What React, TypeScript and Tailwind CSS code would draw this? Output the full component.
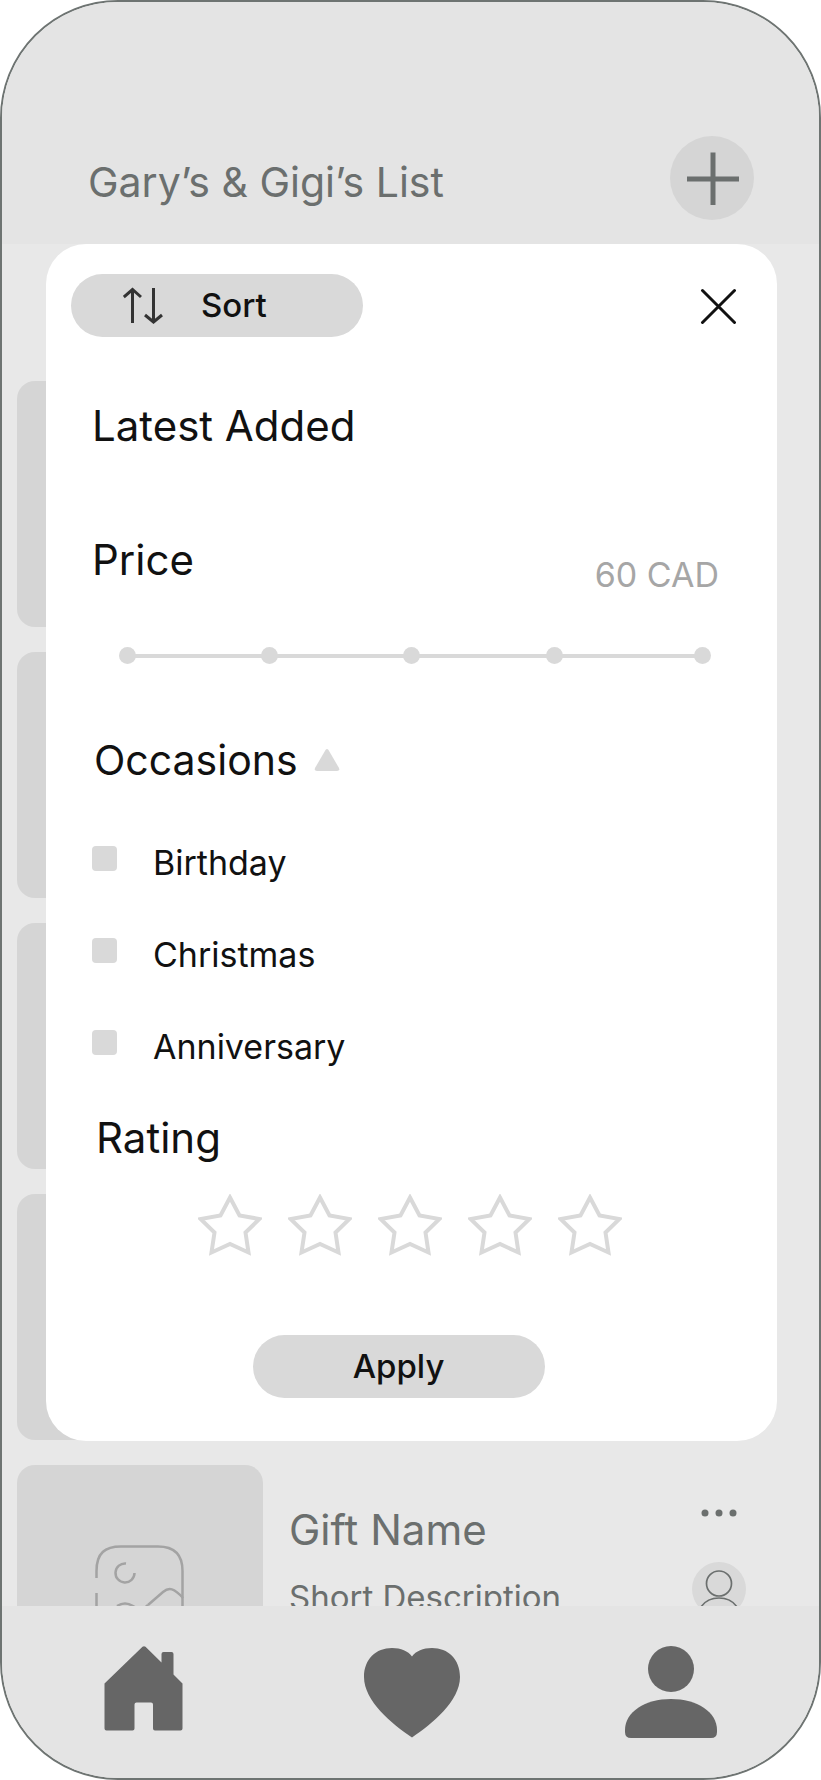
import { useState } from 'react';

const occasions = ['Birthday', 'Christmas', 'Anniversary'];
const stars = [1, 2, 3, 4, 5];

function SortIcon() {
	return (
		<svg width="40" height="38" viewBox="0 0 40 38" fill="none" stroke="#333" strokeWidth="3" aria-hidden="true">
			<path d="M9.500 36V2.500M.8 10L9.500 2.500L18 10" />
			<path d="M30.500 1V34.500M22 28L30.500 35L39 28" />
		</svg>
	);
}

function StarIcon({ filled }: { filled: boolean }) {
	return (
		<svg className="block" width="64" height="62" viewBox="0 0 64 62" fill={filled ? '#d9d9d9' : 'none'} stroke="#d9d9d9" strokeWidth="4" aria-hidden="true">
			<path d="M32 3.500L41.500 21.500L61.500 25L47.500 38.500L50.500 58.500L32 50L13.500 58.500L16.500 38.500L2.500 25L22.500 21.500Z" />
		</svg>
	);
}

function Thumbnail() {
	return (
		<div className="flex h-[246px] w-[246px] shrink-0 items-center justify-center rounded-[18px] bg-[#d5d5d5]">
			<svg width="90" height="86" viewBox="0 0 90 86" fill="none" stroke="#a3a3a3" strokeWidth="2.500" aria-hidden="true">
				<path d="M1.500 33V26C1.500 8 10 1.500 26 1.500H63C79 1.500 87.500 9 87.500 26V60C87.500 77 79 84.500 63 84.500H26C10 84.500 1.500 77 1.500 60V48" />
				<path d="M31 18.500A9.500 9.500 0 1 0 39.500 28" />
				<path d="M53 60L68 47C74 42 79 43 88 53" />
				<path d="M22 61C27 58 33 58 38 61L46 66L53 60" />
			</svg>
		</div>
	);
}

function GiftRow() {
	return (
		<li className="flex text-[#6b6f6e]">
			<Thumbnail />
			<div className="ml-[26px] grow pt-10">
				<h2 className="text-[42px] leading-[50px]">Gift Name</h2>
				<p className="mt-[22px] text-[33px] leading-[40px]">Short Description</p>
			</div>
			<div className="flex w-[54px] flex-col items-center pt-11">
				<button type="button" aria-label="More options">
					<svg className="block" width="36" height="8" viewBox="0 0 36 8" fill="currentColor" aria-hidden="true">
						<circle cx="4" cy="4" r="3.500" />
						<circle cx="18" cy="4" r="3.500" />
						<circle cx="32" cy="4" r="3.500" />
					</svg>
				</button>
				<svg className="mt-[45px]" width="54" height="54" viewBox="0 0 54 54" fill="none" stroke="currentColor" strokeWidth="1.700" aria-hidden="true">
					<circle cx="27" cy="27" r="27" fill="#d9d9d9" stroke="none" />
					<circle cx="27" cy="21.500" r="12.500" />
					<path d="M9 45C13 39 20 36 27 36S41 39 45 45" />
				</svg>
			</div>
		</li>
	);
}

function SortDialog() {
	const [price, setPrice] = useState(60);
	const [rating, setRating] = useState(0);

	return (
		<div role="dialog" aria-label="Sort" className="z-10 col-start-1 row-start-1 mr-[42px] mb-[165px] ml-11 self-start rounded-[40px] bg-white pt-[30px] pb-[43px] text-[#111]">
			<div className="flex items-center justify-between pr-10 pl-[25px]">
				<button type="button" className="flex h-[63px] w-[292px] items-center gap-[38px] rounded-full bg-[#d9d9d9] pl-[52px] text-[33px] font-medium">
					<SortIcon />
					Sort
				</button>
				<button type="button" aria-label="Close">
					<svg className="block" width="38" height="36" viewBox="0 0 38 36" stroke="#111" strokeWidth="3" strokeLinecap="round" aria-hidden="true">
						<path d="M3.500 2.500L35.500 34.500M35.500 2.500L3.500 34.500" />
					</svg>
				</button>
			</div>

			<div className="px-[46px]">
				<h2 className="mt-16 text-[42px] leading-[50px]">Latest Added</h2>

				<div className="mt-[84px] flex items-start justify-between pr-3">
					<label htmlFor="price" className="text-[42px] leading-[50px]">Price</label>
					<output htmlFor="price" className="text-[34px] leading-[80px] text-[#a6a6a6]">{price} CAD</output>
				</div>

				<div className="relative mt-8 mr-5 ml-[27px] grid grid-cols-[142fr_142fr_142fr_148fr_17px] items-center">
					<span className="absolute inset-x-2 h-1 bg-[#d9d9d9]" />
					{[0, 1, 2, 3, 4].map((n) => <span key={n} className="h-[17px] w-[17px] rounded-full bg-[#d9d9d9]" />)}
					<input
						id="price"
						type="range"
						min="20"
						max="100"
						step="20"
						value={price}
						onChange={(e) => setPrice(Number(e.target.value))}
						className="absolute inset-0 w-full opacity-0"
					/>
				</div>

				<fieldset className="mt-[71px]">
					<legend className="flex items-center gap-4 pl-0.5 text-[41px] leading-[50px]">
						Occasions
						<svg width="26" height="24" viewBox="0 0 26 24" fill="#d9d9d9" aria-hidden="true">
							<path d="M11.500 2Q13 0 14.500 2L25 20Q26 23 23 23H3Q0 23 1 20Z" />
						</svg>
					</legend>
					<div className="mt-[61px] flex flex-col gap-[58px]">
						{occasions.map((name) => (
							<label key={name} className="flex items-start gap-9 text-[34px] leading-[34px]">
								<input type="checkbox" className="h-[25px] w-[25px] appearance-none rounded-sm bg-[#d9d9d9] checked:bg-[#6b6f6e]" />
								{name}
							</label>
						))}
					</div>
				</fieldset>

				<h2 className="mt-[49px] pl-1 text-[42px] leading-[50px]">Rating</h2>
				<div className="mt-[31px] flex justify-center gap-[26px] pr-1">
					{stars.map((n) => (
						<button key={n} type="button" aria-label={`${n} of 5`} onClick={() => setRating(n)}>
							<StarIcon filled={n <= rating} />
						</button>
					))}
				</div>

				<div className="mt-[79px] flex justify-center pr-[26px]">
					<button type="button" className="h-[63px] w-[292px] rounded-full bg-[#d9d9d9] text-[33px] font-medium">Apply</button>
				</div>
			</div>
		</div>
	);
}

export default function App() {
	return (
		<div className="flex min-h-screen flex-col overflow-hidden rounded-[118px] border-2 border-[#6e7472] bg-[#e8e8e8] font-['Inter',sans-serif]">
			<header className="flex items-end justify-between bg-[#e4e4e4] pt-[134px] pr-[65px] pb-6 pl-[86px] text-[#6b6f6e]">
				<h1 className="text-[41px] leading-[76px]">Gary’s &amp; Gigi’s List</h1>
				<button type="button" aria-label="Add gift" className="flex h-[84px] w-[84px] items-center justify-center rounded-full bg-[#d5d5d5]">
					<svg width="54" height="54" viewBox="0 0 54 54" stroke="currentColor" strokeWidth="5" aria-hidden="true">
						<path d="M28 1.500V54M2 28H54" />
					</svg>
				</button>
			</header>

			<main className="grid grow">
				<ul className="col-start-1 row-start-1 flex h-0 min-h-full flex-col gap-[25px] overflow-hidden pt-[137px] pr-[73px] pl-[15px]">
					{stars.slice(1).map((n) => <li key={n}><Thumbnail /></li>)}
					<GiftRow />
				</ul>
				<SortDialog />
			</main>

			<nav className="grid grid-cols-[283fr_253fr_265fr] items-start justify-items-center bg-[#e4e4e4] py-10 pr-4 text-[#666]">
				<a href="#home" aria-label="Home">
					<svg className="block" width="80" height="92" viewBox="0 0 80 92" fill="currentColor" aria-hidden="true">
						<path d="M38.500 .8Q40 -.5 41.500 .8L57.500 16.500V8Q57.500 6 59.500 6H67.500Q69.500 6 69.500 8V28.500L78.500 37.500V82.500Q78.500 84.500 76.500 84.500H51Q49 84.500 49 82.500V58.500Q49 56.500 47 56.500H32.500Q30.500 56.500 30.500 58.500V82.500Q30.500 84.500 28.500 84.500H2.500Q.5 84.500 .5 82.500V37.500Z" />
					</svg>
				</a>
				<a href="#favourites" aria-label="Favourites">
					<svg className="block" width="96" height="92" viewBox="0 0 96 92" fill="currentColor" aria-hidden="true">
						<path d="M48 91.500C28 78 0 55 0 31C0 13 12 2 28 2C37 2 44 5 48 10.500C52 5 59 2 68 2C84 2 96 13 96 31C96 55 68 78 48 91.500Z" />
					</svg>
				</a>
				<a href="#profile" aria-label="Profile">
					<svg className="block" width="92" height="92" viewBox="0 0 92 92" fill="currentColor" aria-hidden="true">
						<circle cx="46" cy="23" r="23" />
						<path d="M0 84C0 66 20 53 46 53S92 66 92 84V86Q92 92 86 92H6Q0 92 0 86Z" />
					</svg>
				</a>
			</nav>
		</div>
	);
}
